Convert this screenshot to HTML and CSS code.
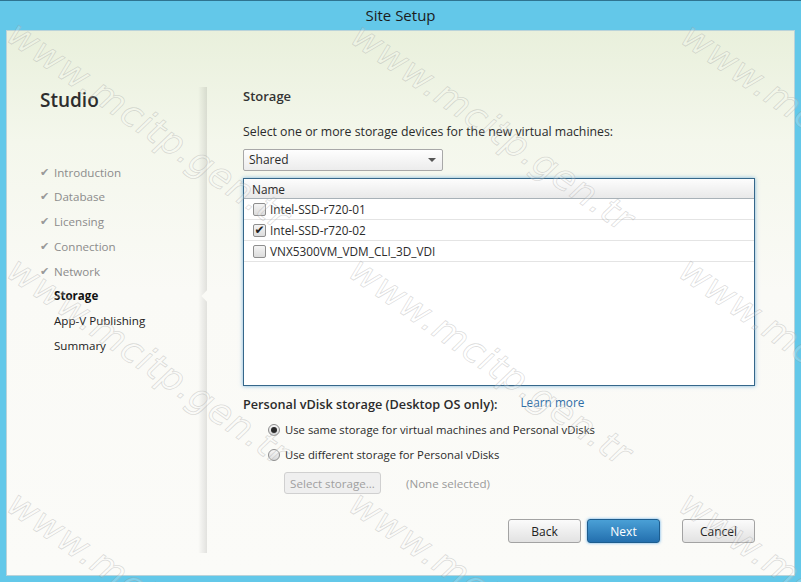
FILE: index.html
```html
<!DOCTYPE html>
<html>
<head>
	<meta charset="UTF-8">
	<title>Site Setup</title>
	<link rel="stylesheet" href="styles.css">
</head>
<body>
	<div class="window">
		<div class="titlebar">Site Setup</div>
		<div class="frame">
			<div class="side">
				<h1>Studio</h1>
				<ul class="steps">
					<li class="done"><i>&#10004;</i>Introduction</li>
					<li class="done"><i>&#10004;</i>Database</li>
					<li class="done"><i>&#10004;</i>Licensing</li>
					<li class="done"><i>&#10004;</i>Connection</li>
					<li class="done"><i>&#10004;</i>Network</li>
					<li class="cur">Storage</li>
					<li>App-V Publishing</li>
					<li>Summary</li>
				</ul>
			</div>
			<div class="main">
				<h2>Storage</h2>
				<p class="hint">Select one or more storage devices for the new virtual machines:</p>
				<div class="combo">Shared<span class="arrow"></span></div>
				<div class="list">
					<div class="list_head">Name</div>
					<div class="row"><span class="chk"></span>Intel-SSD-r720-01</div>
					<div class="row"><span class="chk on">&#10004;</span>Intel-SSD-r720-02</div>
					<div class="row"><span class="chk"></span>VNX5300VM_VDM_CLI_3D_VDI</div>
				</div>
				<div class="pvd">
					<span class="pvd_title">Personal vDisk storage (Desktop OS only):</span>
					<a class="learn">Learn more</a>
				</div>
				<div class="opt first"><span class="radio on"></span>Use same storage for virtual machines and Personal vDisks</div>
				<div class="opt"><span class="radio"></span>Use different storage for Personal vDisks</div>
				<div class="pick">
					<button class="btn" disabled>Select storage...</button>
					<span class="none">(None selected)</span>
				</div>
				<div class="actions">
					<button class="btn back">Back</button>
					<button class="btn next">Next</button>
					<button class="btn">Cancel</button>
				</div>
			</div>
		</div>
		<!-- watermark -->
		<span class="mark m1">www.mcitp.gen.tr</span>
		<span class="mark m2">www.mcitp.gen.tr</span>
		<span class="mark m3">www.mcitp.gen.tr</span>
		<span class="mark m4">www.mcitp.gen.tr</span>
		<span class="mark m5">www.mcitp.gen.tr</span>
		<span class="mark m6">www.mcitp.gen.tr</span>
		<span class="mark m7">www.mcitp.gen.tr</span>
		<span class="mark m8">www.mcitp.gen.tr</span>
		<span class="mark m9">www.mcitp.gen.tr</span>
	</div>
</body>
</html>
```

FILE: styles.css
```css
body{
	margin: 0;
	font-family: "Open Sans", "Noto Sans", sans-serif;
	color: #2b2b2b;
}
.window{
	width: 801px;
	height: 582px;
	background: #63c8e9;
	border-top: 1px solid #2f7490;
	box-sizing: border-box;
	position: relative;
	overflow: hidden;
	display: flex;
	flex-direction: column;
}
.titlebar{
	height: 29px;
	line-height: 29px;
	text-align: center;
	font-size: 15px;
	color: #1c1c1c;
}
.frame{
	flex: 1;
	margin: 0 6px 6px;
	border: 1px solid #b9d3da;
	background: linear-gradient(#e9f0dc, #f4f7ec 110px, #fafaf6 260px, #fbfbf8);
	display: flex;
}
/* left column */
.side{
	width: 200px;
	padding: 56px 0 0 33px;
	box-sizing: border-box;
}
.side h1{
	margin: 0;
	font-size: 19px;
	font-weight: 600;
	line-height: 26px;
	color: #2d2d2d;
}
.steps{
	margin: 47.5px 0 0;
	padding: 0;
	list-style: none;
}
.steps li{
	position: relative;
	padding-left: 14px;
	line-height: 24.8px;
	font-size: 11.6px;
	color: #222;
}
.steps li.done{
	color: #8c8c8c;
}
.steps li.cur{
	font-weight: 700;
	color: #111;
}
.steps i{
	position: absolute;
	left: 0;
	top: 0;
	font-style: normal;
	font-family: "DejaVu Sans", sans-serif;
	font-size: 11px;
	color: #999;
}
/* right column */
.main{
	flex: 1;
	position: relative;
	padding: 56px 39px 0 36px;
}
.main:before{
	content: "";
	position: absolute;
	left: -9px;
	top: 56px;
	bottom: 22px;
	width: 9px;
	background: linear-gradient(90deg, rgba(0,0,0,0), rgba(0,0,0,.1));
}
.main:after{
	content: "";
	position: absolute;
	left: -4px;
	top: 261px;
	width: 8px;
	height: 8px;
	background: #fafaf6;
	transform: rotate(45deg);
}
.main h2{
	margin: 0;
	font-size: 13px;
	font-weight: 600;
	line-height: 18px;
	color: #333;
}
.hint{
	margin: 19px 0 0;
	font-size: 12.3px;
	line-height: 16px;
}
.combo{
	position: relative;
	margin-top: 9px;
	width: 200px;
	height: 22px;
	box-sizing: border-box;
	border: 1px solid #a8a8a8;
	border-radius: 2px;
	background: linear-gradient(#fefefe, #ececec);
	padding-left: 5px;
	line-height: 20px;
	font-size: 12px;
}
.arrow{
	position: absolute;
	right: 6px;
	top: 8px;
	border-left: 4px solid transparent;
	border-right: 4px solid transparent;
	border-top: 4px solid #555;
}
.list{
	margin-top: 7px;
	height: 208px;
	box-sizing: border-box;
	border: 1px solid #35678a;
	box-shadow: 0 0 4px rgba(70,150,210,.7);
	background: #fff;
	font-size: 11.8px;
}
.list_head{
	height: 20px;
	line-height: 20px;
	padding-left: 8px;
	background: linear-gradient(#fdfdfd, #e9e9e9);
	border-bottom: 1px solid #a9b2b8;
	box-sizing: border-box;
}
.row{
	height: 21px;
	box-sizing: border-box;
	border-bottom: 1px solid #e4e4e4;
	display: flex;
	align-items: center;
	padding-left: 9px;
}
.chk{
	width: 13px;
	height: 13px;
	box-sizing: border-box;
	border: 1px solid #8e8e8e;
	border-radius: 2px;
	background: linear-gradient(#f4f4f4, #dcdcdc);
	margin-right: 4px;
	font-family: "DejaVu Sans", sans-serif;
	font-size: 12px;
	line-height: 11px;
	text-align: center;
	color: #222;
}
.pvd{
	margin-top: 9px;
	display: flex;
	align-items: center;
	line-height: 18px;
}
.pvd_title{
	font-size: 12.7px;
	font-weight: 600;
}
.learn{
	margin-left: 23px;
	font-size: 11.8px;
	color: #2f6ea6;
	position: relative;
	top: -2px;
}
.opt{
	display: flex;
	align-items: center;
	line-height: 25px;
	padding-left: 25px;
	font-size: 11.3px;
}
.opt.first{
	margin-top: 4px;
}
.radio{
	width: 12px;
	height: 12px;
	box-sizing: border-box;
	border: 1px solid #8e8e8e;
	border-radius: 50%;
	background: linear-gradient(#f6f6f6, #d9d9d9);
	margin-right: 5px;
	position: relative;
}
.radio.on:after{
	content: "";
	position: absolute;
	left: 2px;
	top: 2px;
	width: 6px;
	height: 6px;
	border-radius: 50%;
	background: #2a2a2a;
}
.pick{
	margin-top: 5px;
	padding-left: 41px;
	display: flex;
	align-items: center;
}
.none{
	margin-left: 25px;
	font-size: 11.6px;
	color: #9a9a9a;
}
.btn{
	font-family: inherit;
	font-size: 12px;
	color: #222;
	height: 24px;
	width: 73px;
	padding: 0;
	border: 1px solid #a3a3a3;
	border-radius: 3px;
	background: linear-gradient(#fbfbfb, #e2e2e2);
}
.pick .btn{
	width: 97px;
	height: 22px;
	font-size: 11.6px;
	color: #a0a0a0;
	border-color: #d0d0d0;
	background: #efefef;
}
.actions{
	margin-top: 25px;
	display: flex;
	justify-content: flex-end;
}
.back{
	margin-left: 1px;
	margin-right: 6px;
}
.next{
	margin-right: 22px;
	color: #fff;
	border-color: #1d5d8e;
	background: linear-gradient(#4aa0d6, #236fae);
	box-shadow: 0 0 3px rgba(50,150,230,.8);
}
/* watermark */
.mark{
	position: absolute;
	font-family: "DejaVu Sans", sans-serif;
	font-style: italic;
	font-size: 36px;
	line-height: 1;
	letter-spacing: 1px;
	white-space: nowrap;
	color: rgba(255,255,255,.2);
	-webkit-text-stroke: 0.8px rgba(150,150,150,.33);
	transform: rotate(35deg);
	transform-origin: 0 0;
	pointer-events: none;
}
.m1{left: 22px; top: 14px;}
.m2{left: 366px; top: 16px;}
.m3{left: 696px; top: 16px;}
.m4{left: 22px; top: 250px;}
.m5{left: 364px; top: 250px;}
.m6{left: 694px; top: 250px;}
.m7{left: 22px; top: 484px;}
.m8{left: 364px; top: 484px;}
.m9{left: 694px; top: 484px;}
```
